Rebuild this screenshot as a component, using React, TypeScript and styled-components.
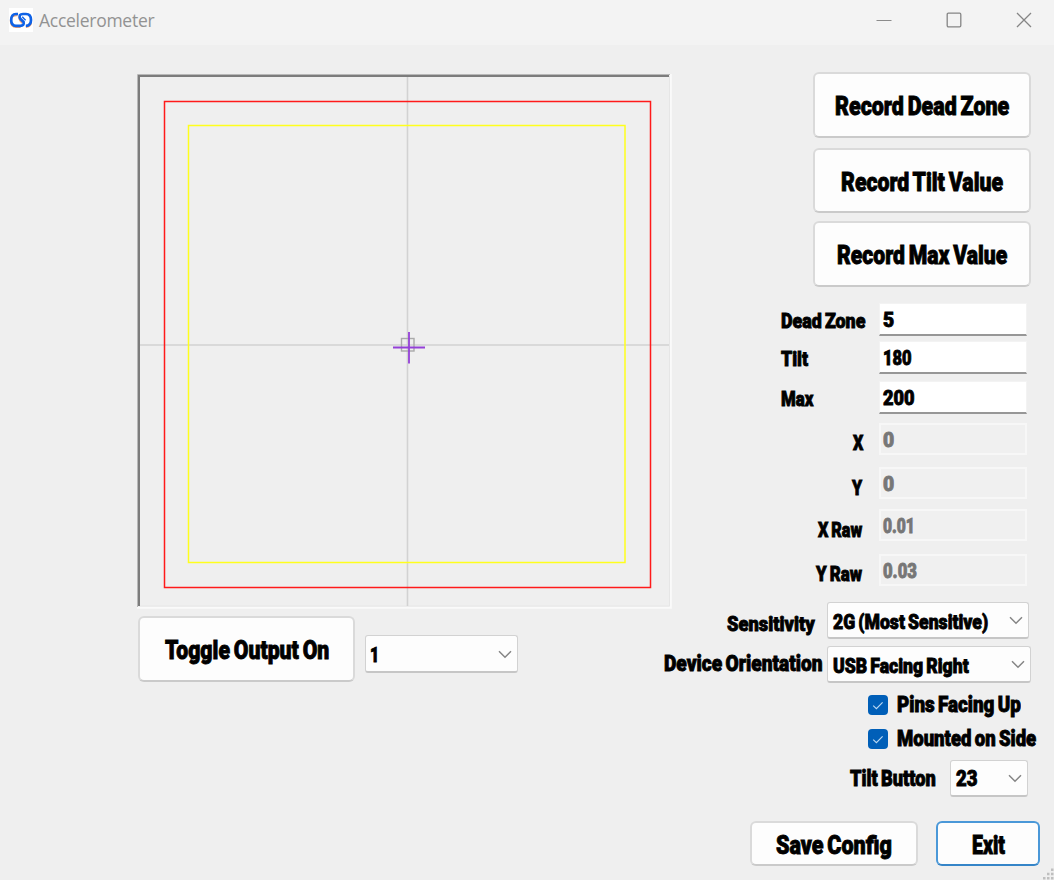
import React, { useLayoutEffect, useRef, useState } from "react";
import styled, { createGlobalStyle } from "styled-components";

const GlobalStyle = createGlobalStyle`
  * { box-sizing: border-box; }
  html, body { margin: 0; padding: 0; overflow: hidden; }
  body { background: #efefef; font-family: Roboto, "Liberation Sans", sans-serif; }
`;

const Window = styled.div`
  width: 1054px;
  height: 880px;
  display: flex;
  flex-direction: column;
  position: relative;
  background: #efefef;
  overflow: hidden;
`;

const TitleBar = styled.header`
  flex: none;
  height: 45px;
  display: flex;
  align-items: center;
  padding: 0 22px 5px 9px;
  background: #f3f3f3;
`;

const AppIcon = styled.div`
  width: 24px;
  height: 24px;
  background: #fff;
  margin-right: 6px;
  svg { display: block; }
`;

const TitleText = styled.div`
  flex: 1;
  font-family: "Open Sans", "Noto Sans", sans-serif;
  font-size: 17.5px;
  letter-spacing: -0.27px;
  line-height: 24px;
  color: #929292;
`;

const Controls = styled.div`
  display: flex;
  gap: 54px;
  svg { display: block; }
`;

const Content = styled.main`
  flex: 1;
  display: flex;
`;

const LeftPane = styled.section`
  padding: 29px 0 0 137px;
  width: 671px;
  margin-right: -40px;
  flex: none;
`;

const Plot = styled.div`
  width: 535px;
  height: 535px;
  svg { display: block; }
`;

const OutputRow = styled.div`
  display: flex;
  padding: 7px 0 0 1px;
  gap: 10px;
`;

const RightPane = styled.section`
  flex: 1;
  display: flex;
  flex-direction: column;
  padding-top: 27px;
`;

const Row = styled.div<{ $top?: number; $right: number; $gap?: number }>`
  display: flex;
  justify-content: flex-end;
  align-items: center;
  margin-top: ${(p) => p.$top ?? 0}px;
  padding-right: ${(p) => p.$right}px;
  gap: ${(p) => p.$gap ?? 0}px;
`;

const Button = styled.button<{ $w: number; $h: number; $primary?: boolean }>`
  width: ${(p) => p.$w}px;
  height: ${(p) => p.$h}px;
  flex: none;
  display: flex;
  align-items: center;
  justify-content: center;
  padding: 2px 0 0;
  font-family: inherit;
  color: #000;
  background: #fdfdfd;
  border-radius: 6px;
  border: 2px solid ${(p) => (p.$primary ? "#4a98d8" : "#dadada")};
  border-bottom-color: ${(p) => (p.$primary ? "#3585c8" : "#cacaca")};
`;

const Field = styled.div<{ $h: number; $disabled?: boolean }>`
  width: 148px;
  height: ${(p) => p.$h}px;
  flex: none;
  display: flex;
  align-items: center;
  padding: ${(p) => (p.$disabled ? "0 0 0 2px" : "2px 0 0 3px")};
  color: ${(p) => (p.$disabled ? "#777" : "#000")};
  background: ${(p) => (p.$disabled ? "#f0f0f0" : "#fff")};
  border: ${(p) => (p.$disabled ? "2px solid #f7f7f7" : "1px solid #f3f3f3")};
  ${(p) => (p.$disabled ? "" : "border-bottom: 2px solid #979797;")}
`;

const Select = styled.div<{ $w: number; $h: number; $top?: number; $pad?: number }>`
  width: ${(p) => p.$w}px;
  height: ${(p) => p.$h}px;
  margin-top: ${(p) => p.$top ?? 0}px;
  flex: none;
  display: flex;
  align-items: center;
  justify-content: space-between;
  padding: 1px 5px 0 ${(p) => p.$pad ?? 5}px;
  background: #fdfdfd;
  border: 1px solid #d2d2d2;
  border-bottom: 2px solid #c6c6c6;
  border-radius: 3px;
`;

const Check = styled.div`
  width: 20px;
  height: 20px;
  border-radius: 4px;
  background: #005fb8;
  display: flex;
  align-items: center;
  justify-content: center;
`;

const TextBox = styled.span<{ $w: number; $after: number }>`
  display: block;
  flex: none;
  width: ${(p) => p.$w}px;
  height: 26px;
  margin-right: ${(p) => p.$after}px;
  text-align: left;
`;

const TextRun = styled.span<{ $size: number }>`
  display: inline-block;
  white-space: nowrap;
  transform-origin: 0 50%;
  font-size: ${(p) => p.$size}px;
  line-height: 26px;
  font-weight: 900;
  word-spacing: -0.07em;
  -webkit-text-stroke: 0.9px currentColor;
`;

/* Heavy condensed lettering: the run is squeezed to the width it is given. */
function Text({ children, w, size = 21, dy = 0, after = 0 }: { children: string; w: number; size?: number; dy?: number; after?: number }) {
  const ref = useRef<HTMLSpanElement>(null);
  const [scale, setScale] = useState(1);
  useLayoutEffect(() => {
    if (ref.current) setScale(w / ref.current.offsetWidth);
  }, [w, size, children]);
  return (
    <TextBox $w={w} $after={after}>
      <TextRun ref={ref} $size={size} style={{ transform: `translateY(${dy}px) scaleX(${scale})` }}>{children}</TextRun>
    </TextBox>
  );
}

const Chevron = () => (
  <svg width="14" height="9" viewBox="0 0 14 9" fill="none" stroke="#858585" strokeWidth="1.5">
    <path d="M1 1.2 L7 7.2 L13 1.2" />
  </svg>
);

const Tick = () => (
  <svg width="12" height="9" viewBox="0 0 12 9" fill="none" stroke="#b9d8f2" strokeWidth="1.2">
    <path d="M1.2 4.6 L4.4 7.6 L10.6 1.4" />
  </svg>
);

const Grip = styled.div`
  position: absolute;
  right: 0;
  bottom: 0;
  svg { display: block; }
`;

const records = [
  { label: "Record Dead Zone", w: 174, h: 66, top: 0 },
  { label: "Record Tilt Value", w: 162, h: 65, top: 10 },
  { label: "Record Max Value", w: 170, h: 66, top: 8 },
];

const fields = [
  { label: "Dead Zone", w: 84, after: 14, value: "5", vw: 11, top: 16, h: 33, dy: 0.5, vdy: 0 },
  { label: "Tilt", w: 27, after: 71, value: "180", vw: 29, top: 5, h: 33, dy: 0.5, vdy: 0 },
  { label: "Max", w: 32, after: 66, value: "200", vw: 32, top: 7, h: 33, dy: 1, vdy: 0 },
  { label: "X", w: 10, after: 16, value: "0", vw: 11, top: 9, h: 32, dy: 4, vdy: 1, off: true },
  { label: "Y", w: 10, after: 17, value: "0", vw: 11, top: 12, h: 32, dy: 5, vdy: 0.5, off: true },
  { label: "X Raw", w: 44, after: 17, value: "0.01", vw: 32, top: 10, h: 32, dy: 5, vdy: 1, off: true },
  { label: "Y Raw", w: 46, after: 17, value: "0.03", vw: 34, top: 13, h: 32, dy: 3.5, vdy: 1, off: true },
];

export default function App() {
  return (
    <>
      <GlobalStyle />
      <Window>
        <TitleBar>
          <AppIcon>
            <svg width="24" height="24" viewBox="0 0 24 24" fill="none" strokeLinecap="butt">
              <path d="M8.5 7.2 H7 Q1.6 7.6 1.8 13 Q2 18.9 7 18.9 H11.5 M9.8 9 Q10.4 12 13.4 15 M17 18.9 Q21 18.9 22.2 15" stroke="#f6a36c" strokeWidth="2" />
              <path d="M9 6 H7 Q2.2 6 2.2 12 Q2.2 17.8 7 17.8 H11.3 Q15.4 17.8 14.6 14 L11 10.4 Q9.4 6 14 6 H17 Q22 6 22 12 Q22 17.8 16.8 17.8" stroke="#0f62e6" strokeWidth="2.7" />
              <path d="M13.2 8.8 L16.6 12.2" stroke="#0f62e6" strokeWidth="1.4" />
            </svg>
          </AppIcon>
          <TitleText>Accelerometer</TitleText>
          <Controls>
            <svg width="16" height="16" fill="none" stroke="#8b8b8b"><path d="M0.5 8.5 H15.5" /></svg>
            <svg width="16" height="16" fill="none" stroke="#858585" strokeWidth="1.3"><rect x="1.2" y="1.2" width="13.6" height="13.6" rx="1.2" /></svg>
            <svg width="16" height="16" fill="none" stroke="#858585" strokeWidth="1.3"><path d="M1 1 L15 15 M15 1 L1 15" /></svg>
          </Controls>
        </TitleBar>
        <Content>
          <LeftPane>
            <Plot>
              <svg width="535" height="535" viewBox="0 0 535 535" fill="none">
                <path d="M0 533.7 H533.8 V0" stroke="#fafafa" strokeWidth="2" />
                <path d="M2 532 H532.5 V2" stroke="#e6e6e6" />
                <path d="M0.5 533 V0.5 H533" stroke="#b8b8b8" />
                <path d="M2 532 V2 H532" stroke="#7c7c7c" strokeWidth="2" />
                <path d="M270.5 3 V532 M3 271 H532" stroke="#d2d2d2" strokeWidth="1.6" />
                <rect x="27.5" y="27.5" width="486" height="486" stroke="#ff1a1a" strokeWidth="1.5" />
                <rect x="51.5" y="51.5" width="436.5" height="437" stroke="#ffff1c" strokeWidth="1.5" />
                <rect x="264.5" y="264.5" width="12.5" height="12.5" stroke="#aaa" strokeWidth="1.4" />
                <path d="M256 273.5 H288 M272 258 V289.5" stroke="#9440d8" strokeWidth="1.8" />
              </svg>
            </Plot>
            <OutputRow>
              <Button $w={217} $h={66}><Text w={164} size={26}>Toggle Output On</Text></Button>
              <Select $w={153} $h={38} $top={19} $pad={4}><Text w={9} dy={0.5}>1</Text><Chevron /></Select>
            </OutputRow>
          </LeftPane>
          <RightPane>
            {records.map((r) => (
              <Row key={r.label} $right={23} $top={r.top}>
                <Button $w={218} $h={r.h}><Text w={r.w} size={26}>{r.label}</Text></Button>
              </Row>
            ))}
            {fields.map((f) => (
              <Row key={f.label} $right={27} $top={f.top}>
                <Text w={f.w} after={f.after} dy={f.dy}>{f.label}</Text>
                <Field $h={f.h} $disabled={f.off}><Text w={f.vw} dy={f.vdy}>{f.value}</Text></Field>
              </Row>
            ))}
            <Row $right={25} $top={16}>
              <Text w={88} after={12} dy={2.5}>Sensitivity</Text>
              <Select $w={202} $h={37}><Text w={155} dy={0.5}>2G (Most Sensitive)</Text><Chevron /></Select>
            </Row>
            <Row $right={23} $top={7}>
              <Text w={159} after={4} size={22} dy={-1.5}>Device Orientation</Text>
              <Select $w={204} $h={37}><Text w={136} dy={0.5}>USB Facing Right</Text><Chevron /></Select>
            </Row>
            <Row $right={33} $top={9} $gap={9}>
              <Check><Tick /></Check><Text w={124} size={22}>Pins Facing Up</Text>
            </Row>
            <Row $right={18} $top={8} $gap={9}>
              <Check><Tick /></Check><Text w={139} size={22}>Mounted on Side</Text>
            </Row>
            <Row $right={26} $top={8}>
              <Text w={86} after={14} size={22}>Tilt Button</Text>
              <Select $w={78} $h={37}><Text w={22} size={22}>23</Text><Chevron /></Select>
            </Row>
            <Row $right={14} $top={24} $gap={18}>
              <Button $w={168} $h={45}><Text w={116} size={26}>Save Config</Text></Button>
              <Button $w={104} $h={45} $primary><Text w={33} size={26}>Exit</Text></Button>
            </Row>
          </RightPane>
        </Content>
        <Grip>
          <svg width="12" height="12" fill="#bfbfbf">
            <path d="M9 0.5h2.5v2.5h-2.5z M5 4.7h2.5v2.5h-2.5z M9 4.7h2.5v2.5h-2.5z M1 9h2.5v2.5h-2.5z M5 9h2.5v2.5h-2.5z M9 9h2.5v2.5h-2.5z" />
          </svg>
        </Grip>
      </Window>
    </>
  );
}
